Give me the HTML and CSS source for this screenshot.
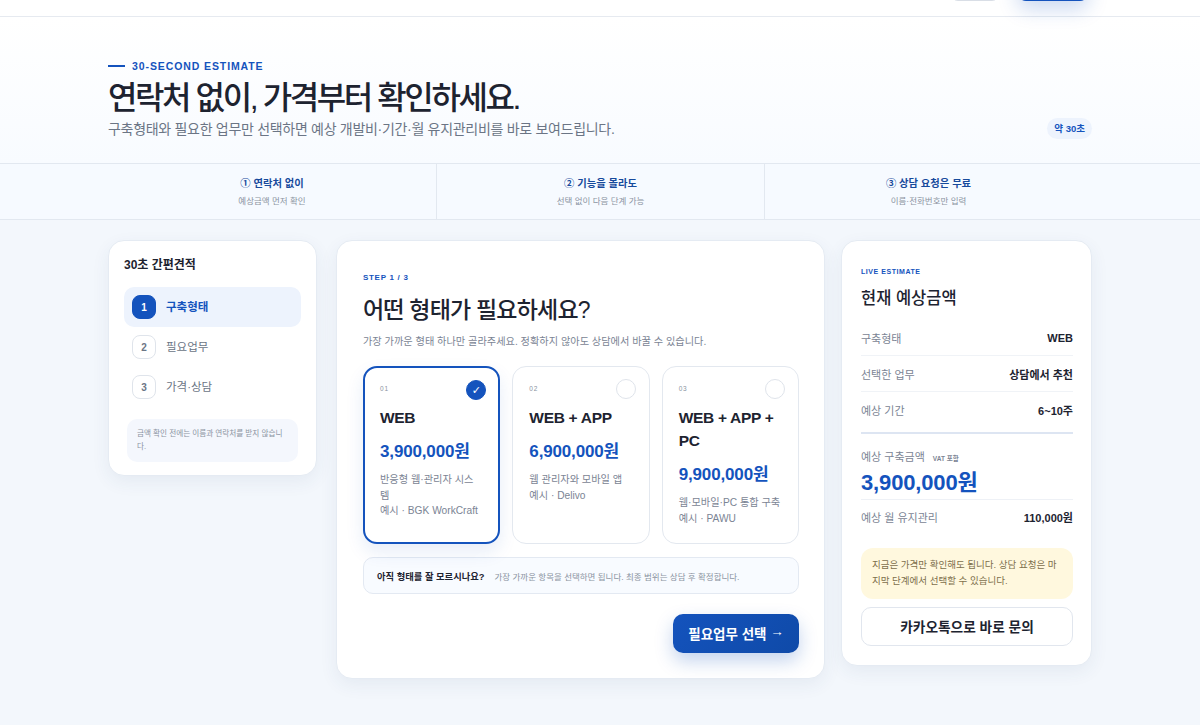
FILE: index.html
```html
<!DOCTYPE html>
<html lang="ko">
<head>
<meta charset="utf-8">
<title>30초 간편견적</title>
<link rel="stylesheet" href="styles.css">
</head>
<body>
<header class="nav">
  <span class="nav-btn nav-ghost"></span>
  <span class="nav-btn nav-solid"></span>
</header>
<section class="hero">
  <div class="hero-inner">
    <div>
      <p class="eyebrow"><i class="dash"></i>30-SECOND ESTIMATE</p>
      <h1>연락처 없이, 가격부터 확인하세요.</h1>
      <p class="lead">구축형태와 필요한 업무만 선택하면 예상 개발비·기간·월 유지관리비를 바로 보여드립니다.</p>
    </div>
    <span class="pill">약 30초</span>
  </div>
</section>
<section class="strip">
  <div class="strip-inner">
    <div class="benefit"><strong>① 연락처 없이</strong><span>예상금액 먼저 확인</span></div>
    <div class="benefit"><strong>② 기능을 몰라도</strong><span>선택 없이 다음 단계 가능</span></div>
    <div class="benefit"><strong>③ 상담 요청은 무료</strong><span>이름·전화번호만 입력</span></div>
  </div>
</section>
<main class="layout">
  <aside class="card side">
    <h2 class="side-title">30초 간편견적</h2>
    <ol class="steps">
      <li class="step active"><b>1</b><span>구축형태</span></li>
      <li class="step"><b>2</b><span>필요업무</span></li>
      <li class="step"><b>3</b><span>가격·상담</span></li>
    </ol>
    <p class="side-note">금액 확인 전에는 이름과 연락처를 받지 않습니다.</p>
  </aside>
  <section class="card center">
    <p class="kicker">STEP 1 / 3</p>
    <h2 class="question">어떤 형태가 필요하세요?</h2>
    <p class="hint">가장 가까운 형태 하나만 골라주세요. 정확하지 않아도 상담에서 바꿀 수 있습니다.</p>
    <div class="options">
      <article class="option selected">
        <span class="num">01</span><span class="radio">✓</span>
        <h3>WEB</h3>
        <p class="price">3,900,000원</p>
        <p class="desc">반응형 웹·관리자 시스템<br>예시 · BGK WorkCraft</p>
      </article>
      <article class="option">
        <span class="num">02</span><span class="radio"></span>
        <h3>WEB + APP</h3>
        <p class="price">6,900,000원</p>
        <p class="desc">웹 관리자와 모바일 앱<br>예시 · Delivo</p>
      </article>
      <article class="option">
        <span class="num">03</span><span class="radio"></span>
        <h3>WEB + APP + PC</h3>
        <p class="price">9,900,000원</p>
        <p class="desc">웹·모바일·PC 통합 구축<br>예시 · PAWU</p>
      </article>
    </div>
    <div class="unsure"><strong>아직 형태를 잘 모르시나요?</strong><span>가장 가까운 항목을 선택하면 됩니다. 최종 범위는 상담 후 확정합니다.</span></div>
    <div class="actions"><button class="next" type="button">필요업무 선택 <span class="arrow">→</span></button></div>
  </section>
  <aside class="card summary">
    <p class="kicker small">LIVE ESTIMATE</p>
    <h2 class="sum-title">현재 예상금액</h2>
    <dl class="rows">
      <div class="row"><dt>구축형태</dt><dd>WEB</dd></div>
      <div class="row"><dt>선택한 업무</dt><dd>상담에서 추천</dd></div>
      <div class="row"><dt>예상 기간</dt><dd>6~10주</dd></div>
    </dl>
    <div class="total">
      <p class="total-label">예상 구축금액 <small>VAT 포함</small></p>
      <p class="total-price">3,900,000원</p>
    </div>
    <div class="row monthly"><span class="dt">예상 월 유지관리</span><span class="dd">110,000원</span></div>
    <p class="notice">지금은 가격만 확인해도 됩니다. 상담 요청은 마지막 단계에서 선택할 수 있습니다.</p>
    <button class="kakao" type="button">카카오톡으로 바로 문의</button>
  </aside>
</main>
</body>
</html>
```
FILE: styles.css
```css
* { box-sizing: border-box; }
html, body { margin: 0; padding: 0; }
body {
  height: 725px;
  overflow: hidden;
  background: #f3f7fc;
  color: #1a202c;
  font-family: "Liberation Sans", "Noto Sans CJK KR", sans-serif;
}
p, h1, h2, h3, ol, dl, dd { margin: 0; padding: 0; }
ol { list-style: none; }

.nav {
  height: 17px;
  display: flex;
  justify-content: flex-end;
  align-items: flex-end;
  gap: 18px;
  padding: 0 112px 15px 0;
  background: #fff;
  border-bottom: 1px solid #e6eaf0;
  position: relative;
  z-index: 2;
}
.nav-btn { flex: none; height: 40px; border-radius: 8px; }
.nav-ghost { width: 50px; border: 1px solid #d9dee6; background: #fff; }
.nav-solid { width: 70px; background: #1453bd; box-shadow: 0 8px 20px rgba(20, 83, 189, .22); }

.hero {
  height: 146px;
  background: linear-gradient(180deg, #fff 0%, #f8fbff 100%);
  padding: 41px 108px 0;
}
.hero-inner { display: flex; justify-content: space-between; align-items: flex-end; height: 81px; }
.eyebrow {
  display: flex; align-items: center; gap: 7px;
  font-size: 10.5px; line-height: 14px; font-weight: 700; letter-spacing: .9px; color: #1453bd;
}
.dash { width: 17px; height: 2px; background: #1453bd; }
h1 { font-size: 32px; line-height: 42px; font-weight: 500; letter-spacing: -2.4px; color: #1d2330; margin-top: 4px; }
.lead { font-size: 14px; line-height: 20px; letter-spacing: -.3px; color: #6b7585; }
.pill {
  flex: none;
  padding: 0 7px; height: 21px; line-height: 21px; border-radius: 11px;
  background: #edf3fd; color: #1453bd; font-size: 9.5px; font-weight: 700;
}

.strip { height: 57px; background: #f6faff; border-top: 1px solid #e2e8f0; border-bottom: 1px solid #e2e8f0; padding: 0 108px; }
.strip-inner { display: grid; grid-template-columns: repeat(3, 1fr); height: 100%; }
.benefit { display: flex; flex-direction: column; align-items: center; justify-content: center; gap: 4px; }
.benefit + .benefit { border-left: 1px solid #e2e8f0; }
.benefit strong { font-size: 10.3px; line-height: 15px; color: #174a9c; }
.benefit span { font-size: 8.5px; line-height: 13px; color: #8a93a1; }

.layout { display: flex; align-items: flex-start; padding: 20px 108px 0; }
.card {
  background: #fff; border: 1px solid #e5ebf3; border-radius: 16px;
  box-shadow: 0 6px 18px rgba(40, 70, 120, .07);
}

.side { flex: none; width: 209px; padding: 16px 15px 13px; margin-right: 19px; }
.side-title { font-size: 12px; line-height: 17px; font-weight: 700; color: #1d2330; }
.steps { margin-top: 13px; }
.step { display: flex; align-items: center; gap: 10px; height: 40px; padding: 0 8px; border-radius: 10px; font-size: 11.5px; color: #6b7585; }
.step span { padding-bottom: 2px; }
.step b { display: flex; align-items: center; justify-content: center; width: 24px; height: 24px; border: 1px solid #dfe4eb; border-radius: 8px; font-size: 10px; background: #fff; }
.step.active { background: #edf3fd; color: #1453bd; font-weight: 700; }
.step.active b { background: #1453bd; border-color: #1453bd; color: #fff; }
.side-note { margin: 12px 3px 0; padding: 8px 10px 9px; background: #f4f7fd; border-radius: 10px; font-size: 7.6px; line-height: 13px; color: #8a93a1; }

.center { flex: none; width: 489px; padding: 31px 25px 25px 26px; margin-right: 16px; }
.kicker { font-size: 8px; line-height: 12px; font-weight: 700; letter-spacing: .7px; color: #1453bd; }
.kicker.small { font-size: 7px; line-height: 10px; letter-spacing: .55px; }
.question { margin-top: 8px; font-size: 23px; line-height: 36px; font-weight: 500; letter-spacing: -.8px; color: #1d2330; }
.hint { margin-top: 6px; font-size: 10.2px; line-height: 16px; color: #7b8494; }
.options { display: grid; grid-template-columns: repeat(3, 1fr); gap: 12px; margin-top: 16px; }
.option {
  position: relative; height: 178px; padding: 17px 16px;
  background: #fff; border: 1px solid #e3e8ef; border-radius: 14px;
}
.option.selected { border: 2px solid #1453bd; padding: 16px 20px 16px 15px; box-shadow: 0 8px 18px rgba(20, 83, 189, .1); }
.num { display: block; font-size: 6.5px; line-height: 10px; letter-spacing: .8px; color: #8a93a1; }
.radio {
  position: absolute; top: 12px; right: 13px; width: 20px; height: 20px;
  display: flex; align-items: center; justify-content: center;
  border: 1px solid #dfe4eb; border-radius: 50%; color: #fff; font-family: "DejaVu Sans", sans-serif; font-size: 11px;
}
.selected .radio { background: #1453bd; border-color: #1453bd; top: 12px; right: 12px; }
.option h3 { margin-top: 12px; font-size: 15.5px; line-height: 23px; font-weight: 700; letter-spacing: -.3px; color: #1d2330; }
.price { margin-top: 11px; font-size: 17px; line-height: 24px; font-weight: 700; letter-spacing: -.15px; color: #1453bd; }
.desc { margin-top: 8px; font-size: 10.2px; line-height: 15.5px; color: #7b8494; }
.unsure {
  display: flex; align-items: center; gap: 10px; height: 37px; margin-top: 13px; padding: 0 13px;
  background: #f8fbff; border: 1px solid #e3e9f2; border-radius: 10px;
}
.unsure strong { font-size: 9.3px; color: #1d2330; }
.unsure span { font-size: 8.5px; color: #8a93a1; }
.actions { display: flex; justify-content: flex-end; margin-top: 20px; }
.next {
  height: 39px; width: 126px; padding: 0 0 1px; border: 0; border-radius: 10px;
  background: linear-gradient(135deg, #1453bd, #0f4aa8); color: #fff;
  font: 600 13.5px "Liberation Sans", "Noto Sans CJK KR", sans-serif;
  box-shadow: 0 8px 18px rgba(20, 83, 189, .25);
}
.arrow { font-weight: 400; vertical-align: 3px; }

.summary { flex: none; width: 251px; padding: 26px 18px 19px 19px; }
.sum-title { margin-top: 8px; font-size: 16.5px; line-height: 26px; font-weight: 500; color: #1d2330; }
.rows { margin-top: 9px; padding-bottom: 4px; border-bottom: 2px solid #dde5f2; }
.row { display: flex; justify-content: space-between; align-items: center; height: 36px; font-size: 11px; border-bottom: 1px solid #f0f3f7; }
.row:last-child { border-bottom: 0; }
.row dt, .dt { color: #7b8494; }
.row dd, .dd { font-weight: 700; color: #1d2330; }
.total { margin-top: 15px; border-bottom: 1px solid #eef1f6; padding-bottom: 1px; }
.total-label { font-size: 11px; line-height: 16px; color: #7b8494; }
.total-label small { margin-left: 5px; font-size: 6.5px; font-weight: 700; }
.total-price { margin-top: 1px; font-size: 22px; line-height: 30px; font-weight: 700; letter-spacing: -.15px; color: #1453bd; }
.monthly { height: 34px; border-bottom: 0; }
.notice { margin-top: 14px; padding: 9px 11px 10px; background: #fff8de; border-radius: 12px; font-size: 9.5px; line-height: 16px; color: #7d6f4c; }
.kakao {
  display: block; width: 100%; height: 39px; margin-top: 8px; padding: 0 0 1px; border: 1px solid #e1e6ee; border-radius: 10px; background: #fff;
  font: 700 13.7px "Liberation Sans", "Noto Sans CJK KR", sans-serif; color: #1d2330;
}
```
